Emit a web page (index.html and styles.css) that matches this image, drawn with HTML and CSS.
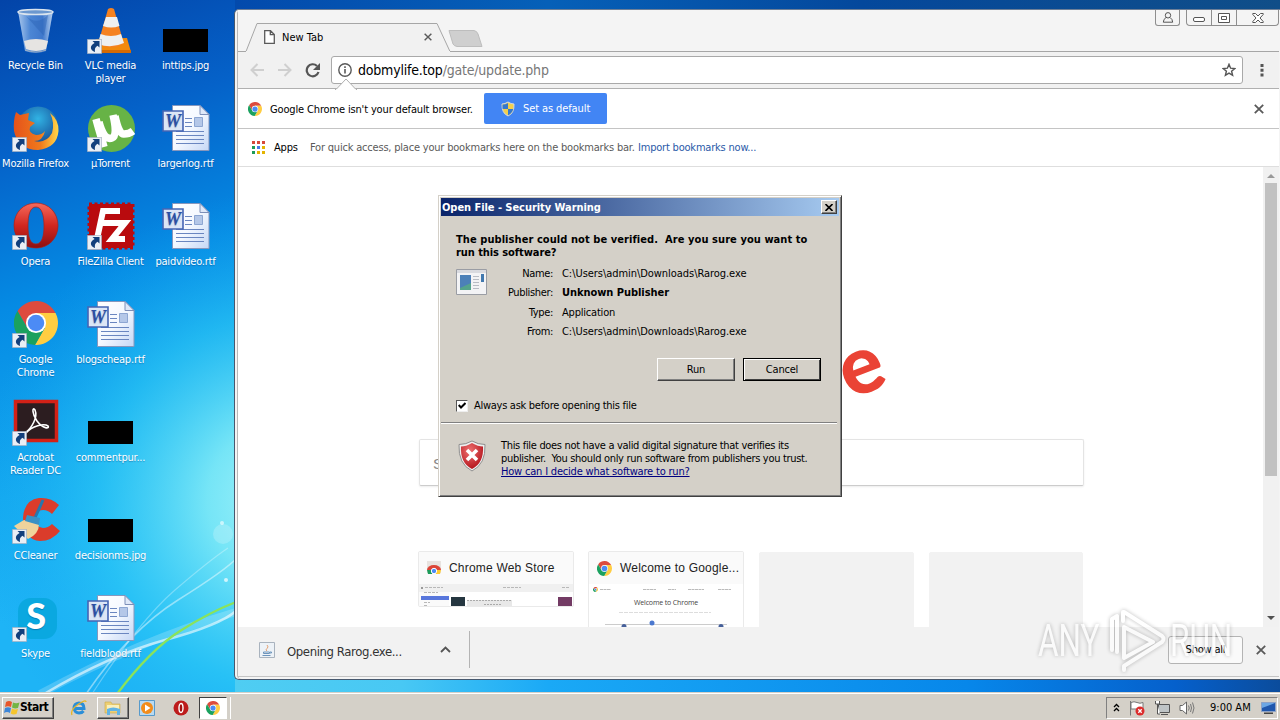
FILE: index.html
```
<!DOCTYPE html>
<html lang="en">
<head>
  <meta charset="utf-8">
  <title>Desktop</title>
  <link rel="stylesheet" href="styles.css">
</head>
<body>
  <svg class="defs" width="0" height="0">
    <defs>
      <linearGradient id="paper" x1="0" y1="0" x2="1" y2="1"><stop offset="0" stop-color="#fff"/><stop offset=".5" stop-color="#f4f8ff"/><stop offset="1" stop-color="#c5d7f5"/></linearGradient>
      <linearGradient id="opera-red" x1="0" y1="0" x2="0" y2="1"><stop offset="0" stop-color="#f56a5c"/><stop offset=".5" stop-color="#d22720"/><stop offset="1" stop-color="#8c0f10"/></linearGradient>
      <linearGradient id="glass" x1="0" y1="0" x2="1" y2="0"><stop offset="0" stop-color="#a8c6ec"/><stop offset=".35" stop-color="#4c86d4"/><stop offset=".7" stop-color="#3f78cc"/><stop offset="1" stop-color="#b9d2f0"/></linearGradient>
      <linearGradient id="flame" x1="0" y1="0" x2="1" y2="0"><stop offset="0" stop-color="#e4521b"/><stop offset=".6" stop-color="#f07a1c"/><stop offset="1" stop-color="#ffd84a"/></linearGradient>
      <radialGradient id="globe" cx=".5" cy=".3" r=".7"><stop offset="0" stop-color="#31b3e4"/><stop offset="1" stop-color="#12408c"/></radialGradient>
      <radialGradient id="shield-red" cx=".4" cy=".3" r=".7"><stop offset="0" stop-color="#ef7272"/><stop offset="1" stop-color="#b4141c"/></radialGradient>
    </defs>
    <symbol id="chrome" viewBox="0 0 48 48">
      <path fill="#dd4b3e" d="M24 13H45.3A24 24 0 0 0 3.8 11L14.5 29.5L24 24z"/>
      <path fill="#ffcd42" d="M24 13H45.3A24 24 0 0 1 22.9 48L33.5 29.5L24 24z"/>
      <path fill="#1aa15f" d="M3.8 11A24 24 0 0 0 22.9 48L33.5 29.5L24 24L14.5 29.5z"/>
      <circle cx="24" cy="24" r="11" fill="#fff"/><circle cx="24" cy="24" r="9" fill="#4c8bf5"/>
    </symbol>
    <symbol id="link" viewBox="0 0 15 15">
      <path fill="#e9eef5" stroke="#8b98ad" stroke-width=".6" d="M.3.3h14.4v14.4H.3z"/>
      <path fill="#123f7c" d="M5.500 2H12.500V8.500L10.500 6.700C8 8.200 7.500 10 8 13C4.500 12 3 9 4.500 6.800C5.200 5.600 6.500 4.800 7.600 4.100z"/>
    </symbol>
    <symbol id="word" viewBox="0 0 48 48">
      <path fill="url(#paper)" stroke="#8797bd" d="M10.500 1.500H38L47 10.500V46.500H10.500z"/>
      <path fill="#dfe8f8" stroke="#7d8fb8" d="M38 1.500V10.500H47z"/>
      <path stroke="#6a86c0" d="M23 14.500H30M23 18.500H30M23 22.500H30M14 27.500H42M14 31.500H42M14 35.500H42M14 39.500H42"/>
      <path fill="#b4c7e8" stroke="#8da6d2" d="M32.500 13.500h8v9h-8z"/>
      <path fill="#dce6f6" stroke="#4565b4" stroke-width="1.6" d="M1 7h20v20H1z"/>
      <text x="11" y="23" text-anchor="middle" font-family="Liberation Serif" font-weight="bold" font-style="italic" font-size="18" fill="#2c4fa3">W</text>
    </symbol>
    <symbol id="cross" viewBox="0 0 10 10"><path stroke="#5a5a5a" stroke-width="1.8" d="M.8.8L9.200 9.200M9.200.8L.8 9.200"/></symbol>
  </svg>

  <svg class="wallpaper" width="1280" height="720" viewBox="0 0 1280 720">
    <defs>
      <linearGradient id="sky" gradientUnits="userSpaceOnUse" x1="0" y1="0" x2="190" y2="560"><stop offset="0" stop-color="#0344a8"/><stop offset=".25" stop-color="#0562c9"/><stop offset=".5" stop-color="#058be4"/><stop offset=".8" stop-color="#15aaf0"/><stop offset="1" stop-color="#1eb4f6"/></linearGradient>
      <radialGradient id="glow" gradientUnits="userSpaceOnUse" cx="285" cy="500" r="310"><stop offset="0" stop-color="#a6f4fa"/><stop offset=".25" stop-color="#80ebf7" stop-opacity=".9"/><stop offset=".6" stop-color="#2dcaf6" stop-opacity=".6"/><stop offset="1" stop-color="#10a0f0" stop-opacity="0"/></radialGradient>
      <linearGradient id="top" x1="0" x2="1"><stop offset="0" stop-color="#034aac"/><stop offset=".3" stop-color="#0660b8"/><stop offset=".6" stop-color="#04489c"/><stop offset="1" stop-color="#104e88"/></linearGradient>
      <linearGradient id="bottom" x1="0" x2="1"><stop offset="0" stop-color="#4fcdf2"/><stop offset=".16" stop-color="#48c8f4"/><stop offset=".3" stop-color="#1aa9f6"/><stop offset=".7" stop-color="#0787ea"/><stop offset=".9" stop-color="#0560cc"/><stop offset="1" stop-color="#0b4c9c"/></linearGradient>
    </defs>
    <path fill="url(#sky)" d="M0 0h1280v720H0z"/>
    <path fill="url(#glow)" d="M0 0h600v720H0z"/>
    <path fill="url(#top)" d="M235 0h1045v12H235z"/>
    <path fill="url(#bottom)" d="M235 679h1045v14H235z"/>
    <path fill="none" stroke="#fff" stroke-opacity=".2" stroke-width="8" d="M40 694Q140 640 236 612"/>
    <path fill="none" stroke="#fff" stroke-opacity=".6" stroke-width="2.500" d="M44 694Q110 655 165 640T236 611"/>
    <path fill="none" stroke="#fff" stroke-opacity=".45" stroke-width="1.500" d="M86 694Q130 630 178 600T238 557"/>
    <path fill="none" stroke="#fff" stroke-opacity=".3" stroke-width="1.200" d="M92 694Q140 620 175 590T228 548"/>
    <path fill="none" stroke="#8be35a" stroke-width="2.300" d="M117 694Q150 650 180 631T236 602"/>
    <circle cx="223" cy="534" r="10" fill="#fff" opacity=".2"/><circle cx="222" cy="523" r="2" fill="#fff" opacity=".6"/><circle cx="226" cy="580" r="2" fill="#fff" opacity=".7"/>
  </svg>

  <div class="icons">
    <div class="icon"><svg viewBox="0 0 48 48"><path fill="url(#glass)" d="M6 5L13 45Q24 49 34 45L41 5z"/><path fill="#e6e4e2" d="M12 35Q24 31 36 35L34 43Q24 47 14 43z"/><path fill="#2d66b8" opacity=".5" d="M14 10L32 30L36 9Q25 20 14 10z"/><ellipse cx="23.500" cy="6" rx="17.500" ry="2.600" fill="#6c98cf" stroke="#dae4ee" stroke-width="1.500"/><path fill="none" stroke="#9aaec4" d="M13 44Q24 48 34 44"/></svg><p>Recycle Bin</p></div>
    <div class="icon"><svg viewBox="0 0 48 48"><path fill="#f28a0c" d="M9 33L3 46H44L40 32z"/><path fill="#d46a04" d="M3 44H44V47H3z"/><path fill="#f58220" d="M21 3Q24 1 27 3L37 38Q24 45 11 38z"/><path fill="#eef0f0" d="M19 11h11l2.500 9Q24 23 16 20zM13.500 28Q24 32 34 28l3 9Q24 43 11 38z"/><use href="#link" y="33" width="15" height="15"/></svg><p>VLC media<br>player</p></div>
    <div class="icon"><svg viewBox="0 0 48 48"><path d="M1 23h45v23H1z"/></svg><p>inttips.jpg</p></div>

    <div class="icon"><svg viewBox="0 0 48 48"><circle cx="26" cy="23" r="20.500" fill="url(#globe)"/><path fill="url(#flame)" d="M4 8L8 11L17 9L16 16L23 19L18 23Q16 29 24 31Q30 31 33 27Q31 37 22 37Q34 40 40 29Q43 19 38 9Q47 16 46.500 27Q45 44 26 46Q6 46 2 27Q1 17 4 8z"/><use href="#link" y="33" width="15" height="15"/></svg><p>Mozilla Firefox</p></div>
    <div class="icon"><svg viewBox="0 0 48 48"><circle cx="24.500" cy="24.500" r="23.500" fill="#67b346"/><path fill="none" stroke="#fff" stroke-width="7.500" d="M9 15Q10 19 17 43M12 18Q17 37 25 34Q31 32 26 11M28 12Q32 31 37 30Q42 30 46 27"/><use href="#link" y="33" width="15" height="15"/></svg><p>µTorrent</p></div>
    <div class="icon"><svg viewBox="0 0 48 48"><use href="#word"/></svg><p>largerlog.rtf</p></div>

    <div class="icon"><svg viewBox="0 0 48 48"><path fill="url(#opera-red)" stroke="#a92019" stroke-width=".7" fill-rule="evenodd" d="M24 1C37 1 46 11 46 23.500S37 46 24 46S2 36 2 23.500S11 1 24 1zM24 5C18 5 16 13 16 24S18 42 24 42S32 34 32 24S30 5 24 5z"/><use href="#link" y="33" width="15" height="15"/></svg><p>Opera</p></div>
    <div class="icon"><svg viewBox="0 0 48 48"><path fill="#b90b0e" stroke="#b90b0e" stroke-width="3" stroke-dasharray="3 2.500" d="M2 2h44v44H2z"/><path fill="none" stroke="#fff" stroke-width="6" d="M33 9H16L10 37M14 21H29M22 21H38L25 37H38"/><use href="#link" y="33" width="15" height="15"/></svg><p>FileZilla Client</p></div>
    <div class="icon"><svg viewBox="0 0 48 48"><use href="#word"/></svg><p>paidvideo.rtf</p></div>

    <div class="icon"><svg viewBox="0 0 48 48"><use href="#chrome" x="2" y="1" width="44" height="44"/><use href="#link" y="33" width="15" height="15"/></svg><p>Google<br>Chrome</p></div>
    <div class="icon"><svg viewBox="0 0 48 48"><use href="#word"/></svg><p>blogscheap.rtf</p></div>
    <div class="icon blank"></div>

    <div class="icon"><svg viewBox="0 0 48 48"><path fill="#2c1d20" stroke="#d22117" stroke-width="3.500" d="M3.500 3.500h41v39h-41z"/><path fill="none" stroke="#fff" stroke-width="1.600" d="M13 35C20 30 26 19 23 12C20 8 20 16 25 23C31 31 38 31 36 28C32 25 20 28 14 35"/><use href="#link" y="33" width="15" height="15"/></svg><p>Acrobat<br>Reader DC</p></div>
    <div class="icon"><svg viewBox="0 0 48 48"><path d="M1 23h45v23H1z"/></svg><p>commentpur...</p></div>
    <div class="icon blank"></div>

    <div class="icon"><svg viewBox="0 0 48 48"><path fill="#db3c2b" d="M47 9Q39 1 27 2Q12 4 11 22Q12 44 28 45Q40 45 48 35L40 28Q36 32 31 32Q23 31 23 22Q24 14 31 14Q36 14 40 18z"/><path fill="#f0d39b" d="M12 24L27 28Q27 38 16 43L2 30z"/><path stroke="#2877ad" stroke-width="3" d="M31 4L22 24"/><path fill="#3a91c5" d="M15 19L28 22L27 29L13 25z"/><use href="#link" y="33" width="15" height="15"/></svg><p>CCleaner</p></div>
    <div class="icon"><svg viewBox="0 0 48 48"><path d="M1 23h45v23H1z"/></svg><p>decisionms.jpg</p></div>
    <div class="icon blank"></div>

    <div class="icon"><svg viewBox="0 0 48 48"><rect x="6" y="4" width="39" height="41" rx="13" fill="#0aa8e0"/><text x="24" y="35" text-anchor="middle" font-family="Lato" font-weight="900" font-size="36" fill="#fff">S</text><use href="#link" y="33" width="15" height="15"/></svg><p>Skype</p></div>
    <div class="icon"><svg viewBox="0 0 48 48"><use href="#word"/></svg><p>fieldblood.rtf</p></div>
  </div>

  <div class="browser">
    <div class="tabstrip">
      <svg class="tab-shape" width="260" height="43" viewBox="0 0 260 43"><path fill="#f1f1f1" stroke="#a6a6a6" d="M0 42.500H8L19 14.500H199L212 42.500H260"/><path fill="#f1f1f1" d="M8 42h204v1H8z"/><path fill="#cfcfcf" stroke="#bdbdbd" d="M211 21.500H236Q239 22 240 25L244 37.500H219Q216 37 215 35z"/></svg>
      <div class="tab">
        <svg width="11" height="14" viewBox="0 0 11 14"><path fill="#fff" stroke="#5a5a5a" stroke-width="1.300" d="M.7.7H6.500L10.300 4.500V13.300H.7zM6.300.7V4.700H10.300"/></svg>
        <span>New Tab</span>
        <svg class="tab-close" width="8" height="8"><use href="#cross"/></svg>
      </div>
      <div class="controls">
        <span class="user"><svg width="12" height="11" viewBox="0 0 12 11"><path fill="none" stroke="#555" d="M6 .6a2.500 2.500 0 0 1 0 5.400a2.500 2.500 0 0 1 0-5.400M4 5.500Q1.500 7 1.300 10.200H10.700Q10.500 7 8 5.500"/></svg></span>
        <span class="min"><svg width="12" height="6" viewBox="0 0 12 6"><rect x=".5" y=".5" width="11" height="4" rx="1.500" fill="#fff" stroke="#555"/></svg></span>
        <span class="max"><svg width="12" height="10" viewBox="0 0 12 10"><path fill="#fff" stroke="#555" d="M.5.5h11v9H.5zM3.500 3.500h5v3h-5z"/></svg></span>
        <span class="shut"><svg width="12" height="10" viewBox="0 0 12 10"><path fill="#fff" stroke="#555" d="M.8.5H3.500L6 3L8.500.5H11.200V1.500L8 5L11.200 8.500V9.500H8.500L6 7L3.500 9.500H.8V8.500L4 5L.8 1.500z"/></svg></span>
      </div>
    </div>
    <div class="toolbar">
      <svg class="nav" width="80" height="16" viewBox="0 0 80 16"><path fill="none" stroke="#cfcfcf" stroke-width="2" d="M14 8H1.500M7.500 2L1.500 8L7.500 14M28 8H40.500M34.500 2L40.500 8L34.500 14"/><path fill="none" stroke="#555" stroke-width="2.200" d="M67 4A6 6 0 1 0 68.500 10"/><path fill="#555" d="M70 1V8H63z"/></svg>
      <div class="address">
        <svg width="14" height="14" viewBox="0 0 14 14"><circle cx="7" cy="7" r="6.200" fill="none" stroke="#5a5a5a" stroke-width="1.400"/><path fill="#5a5a5a" d="M6.200 6h1.600v4.500H6.200zM6.200 3.300h1.600v1.600H6.200z"/></svg>
        <span class="url">dobmylife.top<i>/gate/update.php</i></span>
        <svg class="star" width="14" height="14" viewBox="0 0 14 14"><path fill="none" stroke="#555" stroke-width="1.400" d="M7 1.300L8.600 5.200L12.800 5.500L9.600 8.200L10.600 12.300L7 10.100L3.400 12.300L4.400 8.200L1.200 5.500L5.400 5.200z"/></svg>
      </div>
      <svg class="dots" width="4" height="14" viewBox="0 0 4 14"><path fill="#555" d="M.5 1h3v3h-3zM.5 5.700h3v3h-3zM.5 10.500h3v3h-3z"/></svg>
    </div>
    <div class="infobar">
      <svg class="notch" width="22" height="12" viewBox="0 0 22 12"><path fill="#fff" stroke="#b0b0b0" d="M0 11.500H1L11 1L21 11.500H22"/><path fill="#fff" d="M1.500 11h19v1h-19z"/></svg>
      <svg width="14" height="14"><use href="#chrome"/></svg>
      <span class="info-text">Google Chrome isn't your default browser.</span>
      <button class="default"><svg width="14" height="16" viewBox="0 0 14 16"><path fill="#f2cf4c" stroke="#d4d8dd" d="M7 1Q10 3 13 3Q13.500 12 7 15Q.5 12 1 3Q4 3 7 1z"/><path fill="#3478ce" d="M7 2V8H1.700Q1.400 6 1.600 3.500Q4.500 3.500 7 2zM7 8H12.300Q11 12.500 7 14.300z"/></svg><span>Set as default</span></button>
      <svg class="info-close" width="10" height="10"><use href="#cross"/></svg>
    </div>
    <div class="bookmarks">
      <svg width="13" height="13" viewBox="0 0 13 13"><path fill="#d6493b" d="M0 0h3v3H0zM5 0h3v3H5zM10 0h3v3h-3z"/><path fill="#1d9b58" d="M0 5h3v3H0zM0 10h3v3H0z"/><path fill="#4679e8" d="M5 5h3v3H5z"/><path fill="#e4b400" d="M10 5h3v3h-3zM5 10h3v3H5zM10 10h3v3h-3z"/></svg>
      <span class="apps">Apps</span><span class="hint">For quick access, place your bookmarks here on the bookmarks bar.</span><a href="#">Import bookmarks now...</a>
    </div>
    <div class="page">
      <div class="ntp">
        <div class="logo"><span>e</span></div>
        <div class="search">S</div>
        <div class="tiles">
          <div class="tile store">
            <div class="tile-title"><svg width="14" height="14" viewBox="0 0 14 14"><path fill="#e8e3e0" d="M0 0h14v12H0z"/><path fill="#dc4437" d="M0 9A7 5 0 0 1 14 9z"/><path fill="#1b9b58" d="M0 9h5v4H1z"/><path fill="#fc3" d="M9 9h5l-1 4H9z"/><circle cx="7" cy="10" r="2.700" fill="#4c8bf5" stroke="#fff"/></svg><span>Chrome Web Store</span></div>
            <svg class="thumb" width="154" height="23" viewBox="0 0 154 23"><path fill="#f0f0f0" d="M0 0h154v8H0z"/><path fill="#fafafa" d="M0 8h30v15H0z"/><path fill="#5877dc" d="M2 12h28v4H2z"/><path fill="#253640" d="M32 13h14v10H32z"/><path fill="#733b64" d="M139 13h14v10h-14z"/><path stroke="#b8b8b8" stroke-dasharray="3 1" d="M6 3.500h18M84 3.500h18M143 3.500h8M5 8.500h14M5 18.500h6M5 21.500h4"/><path fill="#e8e8e8" d="M48 16h45v6H48z"/><path stroke="#aaa" stroke-dasharray="2 1" d="M48 16.500h44M65 20.500h18"/><path fill="#999" d="M2 3h2v2H2z"/></svg>
          </div>
          <div class="tile">
            <div class="tile-title"><svg width="15" height="15"><use href="#chrome"/></svg><span>Welcome to Google...</span></div>
            <div class="thumb"><svg class="mini" width="154" height="12" viewBox="0 0 154 12"><use href="#chrome" x="4" y="3" width="5" height="5"/><path stroke="#bbb" stroke-dasharray="3 .5" d="M11 5.500h11M54 5.500h13M79 5.500h8M99 5.500h16M129 5.500h13"/></svg><p>Welcome to Chrome</p><svg width="154" height="22" viewBox="0 0 154 22"><path stroke="#ddd" stroke-dasharray="4 1" d="M30 1.500h92"/><path stroke="#ccc" d="M16 13.500h122"/><circle cx="35" cy="15.500" r="2.500" fill="#46609a"/><circle cx="63" cy="12" r="2.500" fill="#4b78cf"/><circle cx="132" cy="15.500" r="2.500" fill="#46609a"/></svg></div>
          </div>
          <div class="tile empty"></div>
          <div class="tile empty"></div>
        </div>
      </div>
      <div class="scroll"><i class="up"></i><div class="grip"></div><i class="down"></i></div>
    </div>
    <div class="shelf">
      <div class="download">
        <svg width="16" height="16" viewBox="0 0 16 16"><path fill="#edf2f7" stroke="#a9b3be" d="M.5.5h15v15H.5z"/><path fill="none" stroke="#e5a06f" d="M8 3Q10 5 8 6.500T8 9"/><path fill="none" stroke="#6d94bb" d="M4.500 10h6v1.500h-6zM3.500 13.500h8M11 10h1.500v1H11"/></svg>
        <span class="file">Opening Rarog.exe...</span>
        <svg width="11" height="7" viewBox="0 0 11 7"><path fill="none" stroke="#555" stroke-width="1.800" d="M1 6L5.500 1.500L10 6"/></svg>
      </div>
      <button class="show-all">Show all</button>
      <svg width="10" height="10"><use href="#cross"/></svg>
    </div>
  </div>

  <div class="watermark"><span>ANY</span><svg width="58" height="64" viewBox="0 0 58 64"><path fill="none" stroke="#fff" stroke-width="4" stroke-linejoin="round" stroke-linecap="round" d="M4 41V10L9 7V43M16 48V18L45 33L16 49M15 3V12M16 3L54 27Q57 30 54 33L16 57V61"/></svg><span>RUN</span></div>

  <div class="dialog">
    <div class="titlebar"><b>Open File - Security Warning</b><button><svg width="8" height="7" viewBox="0 0 8 7"><path stroke="#000" stroke-width="1.600" d="M.5 0L7.500 7M7.500 0L.5 7"/></svg></button></div>
    <div class="main">
      <h1><span class="question">The publisher could not be verified.&nbsp; Are you sure you want to</span><br><span>run this software?</span></h1>
      <div class="facts">
        <svg width="31" height="26" viewBox="0 0 31 26"><path fill="#f3f3f5" stroke="#9a9da4" d="M.5.5h30v25H.5z"/><path fill="#d9dadf" d="M1 1h29v3H1z"/><path fill="#54a38b" d="M4 6h11v15H4z"/><path fill="#4c80b8" d="M4 6h11v8L4 19z"/><path stroke="#b8bcc4" d="M17 7.500h6M17 10.500h6M17 13.500h6M17 16.500h6M17 19.500h6"/><path fill="#4178ae" d="M25 5h3v8h-3z"/></svg>
        <dl>
          <dt>Name:</dt><dd>C:\Users\admin\Downloads\Rarog.exe</dd>
          <dt>Publisher:</dt><dd><b>Unknown Publisher</b></dd>
          <dt>Type:</dt><dd class="kind">Application</dd>
          <dt>From:</dt><dd>C:\Users\admin\Downloads\Rarog.exe</dd>
        </dl>
      </div>
      <div class="buttons"><button>Run</button><button class="focus">Cancel</button></div>
      <label class="ask"><span class="box"><svg width="8" height="8" viewBox="0 0 8 8"><path fill="none" stroke="#000" stroke-width="2" d="M.7 3L3 5.500L7.500 1"/></svg></span><span>Always ask before opening this file</span></label>
    </div>
    <div class="warn">
      <svg width="28" height="32" viewBox="0 0 28 32"><path fill="#eee" stroke="#8f8f8f" d="M14 1Q20 4.500 27 4.500Q28 24 14 31Q0 24 1 4.500Q8 4.500 14 1z"/><path fill="url(#shield-red)" d="M14 3Q20 6.500 25 6.500Q26 23 14 29Q2 23 3 6.500Q8 6.500 14 3z"/><path stroke="#fff" stroke-width="3.600" d="M9 10L19 20M19 10L9 20"/></svg>
      <p>This file does not have a valid digital signature that verifies its<br>publisher.&nbsp; You should only run software from publishers you trust.<br><a href="#">How can I decide what software to run?</a></p>
    </div>
  </div>

  <div class="taskbar">
    <button class="start"><svg width="16" height="15" viewBox="0 0 16 15"><path fill="#e8562a" d="M2 2Q5 0 8 2L7 7Q4 5.500 1 7z"/><path fill="#73b543" d="M9 2.500Q12 4 15.500 2.500L14 8Q11 9 8 7.500z"/><path fill="#3d86d8" d="M1 8Q4 6.500 7 8L6 13Q3 11 0 13z"/><path fill="#f5c52d" d="M8 8.500Q11 10 14 9L12.500 14Q9 15 6.700 13.500z"/></svg><b>Start</b></button>
    <div class="quick">
      <span><svg width="16" height="16" viewBox="0 0 16 16"><path fill="none" stroke="#2a8ed8" stroke-width="3" d="M3 8.500H13Q13 3 8 3Q3 3.500 3 8.500Q4 13 8 13Q11 13 12.500 11"/><path fill="none" stroke="#e9b625" stroke-width="1.300" d="M1 15Q-1 10 7 4.500T15 2"/></svg></span>
      <span class="raised"><svg width="18" height="16" viewBox="0 0 18 16"><path fill="#edcf73" stroke="#c9a94b" stroke-width=".6" d="M1 2h6l1 2h8v9H1z"/><path fill="#faf0bb" d="M3 5h12v5H3z"/><path fill="#62b4e4" d="M3 9Q9 6 16 9V15H13V11H6V15H3z"/></svg></span>
      <span><svg width="16" height="16" viewBox="0 0 16 16"><path fill="#b9daf1" stroke="#579acb" d="M.5.5h15v15H.5z"/><circle cx="8" cy="8" r="6" fill="#f28c1a"/><path fill="#fff" d="M6 4.500V11.500L11.500 8z"/></svg></span>
      <span><svg width="16" height="16" viewBox="0 0 16 16"><circle cx="8" cy="8" r="7.500" fill="#bd1c1c"/><ellipse cx="8" cy="8" rx="2" ry="4.500" fill="#a31010" stroke="#fff" stroke-width="1.400"/></svg></span>
      <span class="pressed"><svg width="14" height="14"><use href="#chrome"/></svg></span>
    </div>
    <div class="tray">
      <svg width="7" height="9" viewBox="0 0 7 9"><path fill="none" stroke="#000" stroke-width="1.300" d="M1 4L3.500 1.500L6 4M1 8L3.500 5.500L6 8"/></svg>
      <svg width="16" height="16" viewBox="0 0 16 16"><path fill="#fff" stroke="#777" d="M1.500 1V15.500M2 2.500Q5 1 8 2.500T14 2.500V9H2z"/><circle cx="11" cy="11" r="4.500" fill="#dc2c2c"/><path stroke="#fff" stroke-width="1.300" d="M9.300 9.300l3.400 3.400M12.700 9.300l-3.400 3.400"/></svg>
      <svg width="16" height="16" viewBox="0 0 16 16"><path fill="#bfc4c6" stroke="#555" d="M4.500 4.500h11v8h-11zM7 14.500h7"/><path fill="#fff" stroke="#555" d="M1.500 1v3h4V1M3.500 4v10H6"/></svg>
      <svg width="16" height="14" viewBox="0 0 16 14"><path fill="#fff" stroke="#666" d="M1 4.500h2.500L7.500 1v12L3.500 9.500H1z"/><path fill="none" stroke="#777" d="M9.500 4.500Q11 7 9.500 9.500M11.500 3Q13.500 7 11.500 11M13.500 1.500Q16.500 7 13.500 12.500"/></svg>
      <span class="clock">9:00 AM</span>
      <svg width="15" height="12" viewBox="0 0 15 12"><path fill="#1f57ad" stroke="#8da2c6" d="M.5.5h14v9H.5z"/><path fill="#6ca7e5" d="M1 1h13L1 6z"/><path fill="#444" d="M3 10.500h9V12H3z"/></svg>
    </div>
  </div>
</body>
</html>
```
FILE: styles.css
```
* {
  box-sizing: border-box;
}
body {
  margin: 0;
  width: 1280px;
  height: 720px;
  overflow: hidden;
  position: relative;
  background: #0584e0;
  font: 11px/13px "DejaVu Sans Condensed", "DejaVu Sans", sans-serif;
  font-stretch: condensed;
  letter-spacing: -0.2px;
  color: #000;
}
svg {
  display: block;
  flex: none;
}
p, h1, dl, dd {
  margin: 0;
}
p, span, b, a {
  white-space: nowrap;
}
button {
  font: inherit;
  letter-spacing: inherit;
  padding: 0;
  color: #000;
}
.defs, .wallpaper {
  position: absolute;
  left: 0;
  top: 0;
}

/* desktop icons */
.icons {
  position: absolute;
  left: -2px;
  top: 6px;
  display: grid;
  grid-template-columns: repeat(3, 75px);
  grid-auto-rows: 98px;
}
.icon {
  color: #fff;
  text-align: center;
  text-shadow: 0 1px 1px rgba(0, 40, 100, 0.35);
}
.icon svg {
  width: 48px;
  height: 48px;
  margin: 0 auto 5px;
}
.icon p {
  margin: 0 -6px;
}

/* browser window */
.browser {
  position: absolute;
  left: 234px;
  top: 9px;
  width: 1046px;
  height: 671px;
  display: flex;
  flex-direction: column;
  background: #f4f4f4;
  border: 1px solid #47586e;
  border-top-color: #6d7f97;
  border-right: 0;
  border-radius: 5px 0 0 5px;
  box-shadow: inset 2px 0 #f4f4f4, inset 3px 0 #b8b8b8;
  padding: 0 1px 2px 3px;
}
.tabstrip {
  height: 42px;
  display: flex;
  position: relative;
  background: #f4f4f4;
  border-bottom: 1px solid #a6a6a6;
}
.tab-shape {
  position: absolute;
  left: 0;
  top: -1px;
}
.tab {
  position: relative;
  display: flex;
  align-items: center;
  width: 200px;
  height: 30px;
  margin-top: 12px;
  padding-left: 26px;
  letter-spacing: 0;
}
.tab span {
  margin-left: 7px;
}
.tab-close {
  margin-left: auto;
  margin-right: 6px;
}
.controls {
  display: flex;
  margin-left: auto;
  height: 16px;
}
.controls span {
  display: flex;
  align-items: center;
  justify-content: center;
  border: 1px solid #8e8e8e;
  border-top: 0;
  width: 26px;
}
.controls .user {
  width: 25px;
  margin-right: 6px;
  border-radius: 0 0 3px 3px;
}
.controls .min {
  border-radius: 0 0 0 4px;
  padding-top: 5px;
}
.controls .max {
  width: 25px;
  border-left: 0;
}
.controls .shut {
  width: 42px;
  border-left: 0;
  border-radius: 0 0 4px 0;
}
.toolbar {
  height: 37px;
  display: flex;
  align-items: center;
  background: #f1f1f1;
  border-bottom: 1px solid #b0b0b0;
  padding: 0 15px 0 12px;
}
.nav {
  margin-right: 1px;
}
.address {
  width: 912px;
  height: 28px;
  display: flex;
  align-items: center;
  background: #fff;
  border: 1px solid #a9a9a9;
  border-radius: 3px;
  padding: 0 6px;
}
.url {
  margin-left: 6px;
  font-size: 14px;
}
.url i {
  font-style: normal;
  color: #777;
}
.star {
  margin-left: auto;
}
.dots {
  margin-left: auto;
}
.infobar {
  height: 40px;
  position: relative;
  display: flex;
  align-items: center;
  background: #fff;
  border-bottom: 1px solid #c4c4c4;
  padding: 0 15px 0 10px;
}
.notch {
  position: absolute;
  left: 97px;
  top: -11px;
}
.info-text {
  width: 214px;
  margin-left: 8px;
  padding-top: 1px;
  letter-spacing: -0.15px;
}
.default {
  width: 123px;
  height: 31px;
  display: flex;
  align-items: center;
  padding-left: 17px;
  border: 0;
  border-radius: 2px;
  background: #4285f4;
  letter-spacing: -0.1px;
  color: #fff;
}
.default span {
  margin-left: 8px;
}
.info-close {
  margin-left: auto;
}
.bookmarks {
  height: 38px;
  display: flex;
  align-items: center;
  background: #fff;
  border-bottom: 1px solid #dedede;
  padding: 0 0 1px 14px;
}
.apps {
  width: 36px;
  margin-left: 9px;
}
.hint {
  width: 328px;
  color: #5a5a5a;
}
.bookmarks a {
  color: #2a5aa8;
  text-decoration: none;
}
.page {
  height: 460px;
  display: flex;
  background: #fff;
  overflow: hidden;
}
.ntp {
  width: 1026px;
  padding-left: 180px;
}
.logo {
  height: 272px;
  padding: 155px 0 0 419px;
}
.logo span {
  display: block;
  width: 48px;
  font: 900 81px/80px Lato, sans-serif;
  letter-spacing: 0;
  color: #ea4335;
  transform: rotate(-21deg);
}
.search {
  width: 665px;
  height: 47px;
  margin-left: 1px;
  padding: 16px 13px;
  border: 1px solid #e4e4e4;
  border-bottom-color: #ccc;
  border-radius: 2px;
  box-shadow: 0 1px 2px rgba(0, 0, 0, 0.08);
  font: 15px/16px "Liberation Sans", sans-serif;
  color: #888;
}
.tiles {
  display: flex;
  gap: 14px;
  margin-top: 65px;
}
.tile {
  width: 156px;
  height: 130px;
  flex: none;
  overflow: hidden;
  border: 1px solid #eaeaea;
  border-radius: 2px;
  background: #fff;
}
.tile.store {
  height: 56px;
}
.tile.empty {
  width: 155px;
  margin: 1px 0 0 1px;
  border-color: #f2f2f2;
  background: #f2f2f2;
}
.tile.empty + .tile.empty {
  width: 154px;
}
.tile-title {
  height: 32px;
  display: flex;
  align-items: center;
  padding-left: 8px;
  background: #fafafa;
  font: 12px/16px "Liberation Sans", sans-serif;
  letter-spacing: 0.2px;
  color: #222;
}
.tile-title span {
  margin-left: 8px;
}
.thumb p {
  margin: 1px 0 2px;
  font: 7px/12px "Open Sans", sans-serif;
  letter-spacing: -0.15px;
  text-align: center;
  color: #444;
}
.scroll {
  width: 16px;
  display: flex;
  flex-direction: column;
  align-items: center;
  background: #f1f1f1;
}
.scroll i {
  border: 4px solid transparent;
}
.scroll .up {
  margin-top: 3px;
  border-bottom-color: #999;
}
.grip {
  width: 12px;
  height: 293px;
  margin-top: 5px;
  background: #c1c1c1;
}
.scroll .down {
  margin-top: auto;
  margin-bottom: 3px;
  border-top-color: #505050;
}
.shelf {
  flex: 1;
  display: flex;
  align-items: center;
  background: #f2f2f2;
  border-bottom: 1px solid #c4c4c4;
  padding: 0 13px 4px 21px;
}
.download {
  width: 211px;
  height: 37px;
  display: flex;
  align-items: center;
  border-right: 1px solid #b4b4b4;
}
.file {
  width: 153px;
  margin-left: 12px;
  padding-top: 4px;
  font-size: 13px;
  letter-spacing: -0.4px;
  color: #333;
}
.show-all {
  width: 75px;
  height: 28px;
  margin: 0 13px 0 auto;
  border: 1px solid #b4b4b4;
  border-radius: 3px;
  background: #fafafa;
}

/* ANY.RUN overlay */
.watermark {
  position: absolute;
  left: 1038px;
  top: 609px;
  width: 198px;
  height: 64px;
  display: flex;
  justify-content: space-between;
  align-items: center;
  filter: drop-shadow(0 0 2px rgba(0, 0, 0, 0.4));
  opacity: 0.65;
}
.watermark span {
  width: 66px;
  font: 45px/64px Roboto, sans-serif;
  letter-spacing: 0;
  color: #fff;
  transform: scaleX(0.7);
  transform-origin: 0 0;
}

/* security warning */
.dialog {
  position: absolute;
  left: 438px;
  top: 195px;
  width: 404px;
  height: 302px;
  padding: 2px;
  background: #d4d0c8;
  border: 1px solid;
  border-color: #d4d0c8 #404040 #404040 #d4d0c8;
  box-shadow: inset 1px 1px #fff, inset -1px -1px #808080;
}
.titlebar {
  height: 18px;
  display: flex;
  align-items: center;
  justify-content: space-between;
  padding: 0 2px 0 1px;
  background: linear-gradient(90deg, #0a246a, #a6caf0);
  letter-spacing: -0.05px;
  color: #fff;
}
.titlebar button {
  width: 16px;
  height: 14px;
  display: flex;
  align-items: center;
  justify-content: center;
}
.titlebar button, .buttons button, .start, .raised {
  background: #d4d0c8;
  border: 1px solid;
  border-color: #fff #404040 #404040 #fff;
  box-shadow: inset -1px -1px #808080;
}
.main {
  height: 208px;
  margin: 0 2px 0 0;
  padding: 17px 16px 0 15px;
  border-bottom: 1px solid #fff;
  box-shadow: inset 0 -1px #808080;
}
.dialog h1 {
  font-size: 11px;
  letter-spacing: -0.07px;
}
.dialog .question {
  letter-spacing: 0.07px;
}
.facts {
  display: flex;
  margin-top: 10px;
}
dl {
  display: grid;
  grid-template-columns: 66px auto;
  grid-auto-rows: 19.3px;
  column-gap: 9px;
  margin: -2px 0 0;
}
dt {
  text-align: right;
  letter-spacing: -0.35px;
}
dd {
  letter-spacing: -0.05px;
}
dd.kind {
  letter-spacing: -0.2px;
}
.buttons {
  display: flex;
  justify-content: flex-end;
  gap: 8px;
  margin-top: 14px;
}
.buttons button {
  width: 78px;
  height: 23px;
}
.buttons .focus {
  border-color: #000;
  box-shadow: inset 1px 1px #fff, inset -1px -1px #404040;
}
.ask {
  display: flex;
  align-items: center;
  margin-top: 18px;
  letter-spacing: -0.28px;
}
.box {
  width: 12px;
  height: 12px;
  margin-right: 6px;
  padding: 1px;
  background: #fff;
  border: 1px solid;
  border-color: #555 #eee #eee #555;
}
.warn {
  display: flex;
  padding: 15px 17px;
}
.warn svg {
  margin-top: 1px;
}
.warn p {
  margin-left: 15px;
  letter-spacing: -0.32px;
}
.warn a {
  letter-spacing: -0.19px;
  color: #000080;
}

/* taskbar */
.taskbar {
  position: absolute;
  left: 0;
  top: 692px;
  width: 1280px;
  height: 28px;
  display: flex;
  align-items: center;
  padding: 3px 2px 1px;
  background: #d4d0c8;
  border-top: 1px solid #d4d0c8;
  box-shadow: inset 0 1px #fff;
}
.start {
  width: 52px;
  height: 22px;
  display: flex;
  align-items: center;
  padding-left: 1px;
}
.start b {
  font-size: 12px;
  letter-spacing: -0.5px;
}
.quick {
  display: flex;
  margin-left: 9px;
}
.quick span {
  width: 32px;
  height: 22px;
  margin-right: 2px;
  display: flex;
  align-items: center;
  justify-content: center;
}
.quick .pressed {
  width: 28px;
  background: #fff;
  border: 1px solid;
  border-color: #404040 #fff #fff #404040;
  box-shadow: 3px 0 #d4d0c8, 4px 0 #fff;
}
.tray {
  width: 172px;
  height: 22px;
  display: flex;
  align-items: center;
  margin-left: auto;
  padding: 0 1px 0 6px;
  gap: 9px;
  border: 1px solid;
  border-color: #808080 #fff #fff #808080;
}
.clock {
  margin: 0 1px 0 6px;
  letter-spacing: 0;
}
```
